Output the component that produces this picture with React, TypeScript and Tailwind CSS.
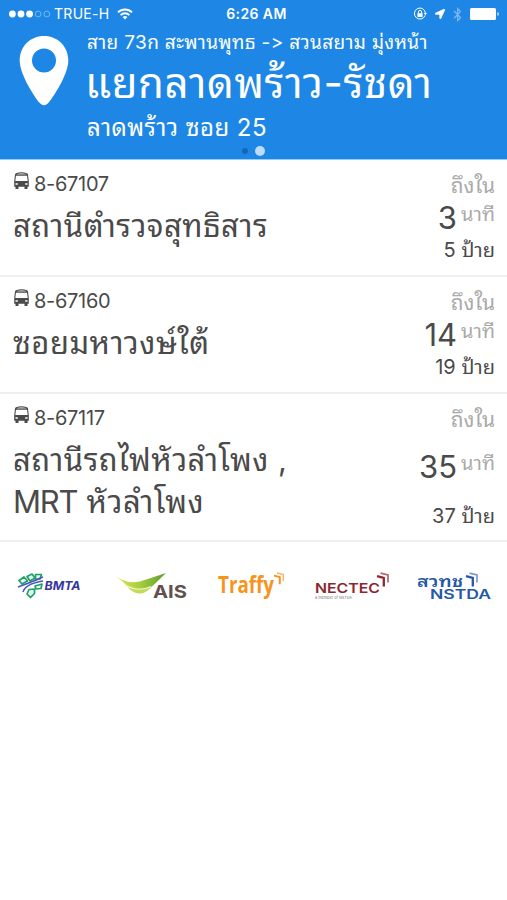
import type { ReactNode } from 'react';
import { FaBluetoothB, FaLocationArrow } from 'react-icons/fa';

type Arrival = {
  bus: string;
  place: ReactNode[];
  minutes: number;
  stops: number;
};

const arrivals: Arrival[] = [
  { bus: '8-67107', place: ['สถานีตำรวจสุทธิสาร'], minutes: 3, stops: 5 },
  { bus: '8-67160', place: ['ซอยมหาวงษ์ใต้'], minutes: 14, stops: 19 },
  {
    bus: '8-67117',
    place: [
      'สถานีรถไฟหัวลำโพง ,',
      <>
        <span className="tracking-[-1.2px]">MRT</span> หัวลำโพง
      </>,
    ],
    minutes: 35,
    stops: 37,
  },
];

function StatusBar() {
  return (
    <div className="grid h-7 grid-cols-3 items-center pl-[9px] pr-[7px] text-[14px] leading-none">
      <div className="flex items-center">
        <svg width="42" height="10" viewBox="0 0 42 10" fill="white">
          <circle cx="3.4" cy="5" r="3.4" />
          <circle cx="12" cy="5" r="3.4" />
          <circle cx="20.6" cy="5" r="3.4" />
          <circle cx="29.2" cy="5" r="2.9" fill="none" stroke="#8cc2f2" strokeWidth="0.8" />
          <circle cx="37.8" cy="5" r="2.9" fill="none" stroke="#8cc2f2" strokeWidth="0.8" />
        </svg>
        <span className="ml-[3px] whitespace-nowrap tracking-[0.3px]">TRUE-H</span>
        <svg className="ml-[7px]" width="16" height="12" viewBox="0 0 16 12" fill="none" stroke="white" strokeWidth="1.9">
          <path d="M1 4.4a10 10 0 0 1 14 0" />
          <path d="M3.6 7.1a6.3 6.3 0 0 1 8.800 0" />
          <path d="M8 11.5 5.6 9.1a3.4 3.4 0 0 1 4.8 0z" fill="white" stroke="none" />
        </svg>
      </div>
      <div className="whitespace-nowrap pl-1 text-center font-semibold tracking-[0.4px]">6:26 AM</div>
      <div className="flex items-center justify-end">
        <svg width="14" height="14" viewBox="0 0 14 14" fill="none" stroke="white">
          <path d="M12.1 8.4A5.5 5.5 0 1 1 12.4 6" strokeWidth="1" />
          <path d="M10.8 6h3.2l-1.6 2.2z" fill="white" stroke="none" />
          <rect x="4.4" y="6.2" width="5.2" height="3.8" rx="0.4" fill="white" stroke="none" />
          <path d="M5.4 6.4V5a1.6 1.6 0 0 1 3.2 0v1.4" strokeWidth="1" />
        </svg>
        <FaLocationArrow className="ml-2 size-[10px]" />
        <FaBluetoothB className="ml-[5px] size-[15px] text-[#7db8f0]" />
        <svg className="ml-[5px]" width="30" height="12" viewBox="0 0 30 12" fill="white">
          <rect x="0" y="0" width="26" height="12" rx="1.5" />
          <path d="M27.5 4v4a2.2 2.2 0 0 0 0-4z" />
        </svg>
      </div>
    </div>
  );
}

function PinIcon() {
  return (
    <svg width="50" height="70" viewBox="0 0 50 70">
      <path
        fill="white"
        fillRule="evenodd"
        d="M25 0C11 0 .7 10.700.7 24.500c0 14 15 36.500 19.800 42.300 2.700 3.200 6.300 3.200 9 0C34.300 61 49.300 38.500 49.300 24.500 49.300 10.700 39 0 25 0zm0 12.500a12 12 0 1 1 0 24 12 12 0 0 1 0-24z"
      />
    </svg>
  );
}

function BusIcon() {
  return (
    <svg width="16" height="18" viewBox="0 0 16 18">
      <path
        d="M3 1.200Q8.500-.6 14 1.200q.8.400 1 1.400l.8 6.600v5.600h-1.300V17h-3v-2.200H5.500V17h-3v-2.200H1.200V9.200L2 2.600q.2-1 1-1.400z"
        fill="#4a4a4a"
      />
      <path d="M4 1.900Q8.500.8 13 1.900v.7H4z" fill="#cccccc" />
      <path d="M3 3.700h11l.7 5.300H2.300z" fill="white" />
      <path d="M2.500 11.200h2.300v1.600H2.500zM12.200 11.200h2.300v1.600h-2.300z" fill="white" />
    </svg>
  );
}

function Header() {
  return (
    <header className="flex h-[160px] flex-col border-b border-[#8fd0fa] bg-[#1e87e5] text-white">
      <StatusBar />
      <div className="flex">
        <div className="w-[87px] pl-[19px] pt-2">
          <PinIcon />
        </div>
        <div className="whitespace-nowrap">
          <div className="h-[30px] text-[19px] leading-[30px] tracking-[0.34px]">สาย 73ก สะพานพุทธ -&gt; สวนสยาม มุ่งหน้า</div>
          <div className="-ml-0.5 h-[52px] text-[42px] leading-[50px] tracking-[0.6px]">แยกลาดพร้าว-รัชดา</div>
          <div className="h-9 text-[24px] leading-9 tracking-[0.45px]">ลาดพร้าว ซอย 25</div>
        </div>
      </div>
      <div className="flex h-[10px] items-center justify-center gap-[7px]">
        <span className="size-[6px] rounded-full bg-[#1567b5]" />
        <span className="size-[10px] rounded-full bg-[#bcdcf8]" />
      </div>
    </header>
  );
}

function ArrivalRow({ arrival }: { arrival: Arrival }) {
  const tall = arrival.place.length > 1;

  return (
    <li
      className={`flex justify-between border-b-2 border-[#f0f0f1] pl-[13px] pr-3 text-[#4a4a4a] ${
        tall ? 'h-[148px]' : 'h-[117px]'
      }`}
    >
      <div className="whitespace-nowrap">
        <div className="flex items-start gap-[5px] pt-3">
          <BusIcon />
          <span className="text-[20px] leading-6 tracking-[-0.3px]">{arrival.bus}</span>
        </div>
        <div className="pt-[9px] text-[31px] leading-[42px] tracking-[0.5px]">
          {arrival.place.map((line, index) => (
            <div key={index} className="h-[42px]">{line}</div>
          ))}
        </div>
      </div>
      <div className="flex flex-col items-end whitespace-nowrap">
        <div className="h-[38px] pt-[10px] text-[21px] leading-8 text-[#aaaaaa]">ถึงใน</div>
        <div className={`flex gap-1 ${tall ? 'h-[67px] pt-[15px]' : 'h-[35px]'}`}>
          <span className="text-[31px] leading-10">{arrival.minutes}</span>
          <span className="text-[20px] leading-[32px] text-[#aaaaaa]">นาที</span>
        </div>
        <div className="text-[20px] leading-[34px]">{arrival.stops} ป้าย</div>
      </div>
    </li>
  );
}

function BmtaLogo() {
  return (
    <svg width="66" height="30" viewBox="0 0 66 30">
      <g fill="#e4f8ef" stroke="#1fa067" strokeWidth="1.700" strokeLinejoin="round">
        <path d="M2 9.500 7 6l3.500 4L5 13z" />
        <path d="M10 5.500 15 3l3 4-5 3z" />
        <path d="M18.500 3.500h6L23 8l-4.500.5z" />
        <path d="M18 15l7-2L24 17.500l-5 .5z" />
        <path d="M12 18.500l5.500-.5v4.500l-4 4-3.500-3.500z" />
      </g>
      <path d="M1 16q8-3 12-4.500T26 6M6 21Q8 13 26 10" fill="none" stroke="#4a57b8" strokeWidth="1.500" />
      <text x="27.500" y="19" fontSize="12" fontWeight="700" fontStyle="italic" fill="#37379c" textLength="36" lengthAdjust="spacingAndGlyphs">
        BMTA
      </text>
    </svg>
  );
}

function AisLogo() {
  return (
    <svg width="74" height="32" viewBox="0 0 74 32">
      <defs>
        <linearGradient id="leaf" x1="0" x2="1">
          <stop offset="0" stopColor="#dbe94e" />
          <stop offset="0.5" stopColor="#a5cc3b" />
          <stop offset="1" stopColor="#5c9b34" />
        </linearGradient>
      </defs>
      <path d="M0 5.500q12 8 24 5Q38 6 50 2 42 10 36 15.500 25 25 14 18 9 12 0 5.500z" fill="url(#leaf)" />
      <path d="M9 13q14 8 27 2.500Q25 28 14 18.500z" fill="#c4dc55" />
      <path d="M10 14.500q13 7 25 1" fill="none" stroke="#f3f9cf" strokeWidth="1.200" />
      <text x="37" y="27" fontSize="18" fontWeight="700" fill="#62504e" textLength="34" lengthAdjust="spacingAndGlyphs">
        AIS
      </text>
    </svg>
  );
}

function Chevrons({ front, back }: { front: string; back: string }) {
  return (
    <>
      <path d="M3.500 1.200 11 3v7.500" fill="none" stroke={back} strokeWidth="1.700" />
      <path d="M0 4.200 6.800 6v8.500" fill="none" stroke={front} strokeWidth="2.300" />
    </>
  );
}

function TraffyLogo() {
  return (
    <svg width="70" height="36" viewBox="0 0 70 36">
      <text
        x="1"
        y="21.500"
        fontSize="23"
        fontWeight="700"
        fill="#f7941e"
        textLength="56"
        lengthAdjust="spacingAndGlyphs"
        className="font-['Open_Sans',sans-serif]"
      >
        Traffy
      </text>
      <g transform="translate(57 1) scale(0.85)">
        <Chevrons front="#f7941e" back="#f9b565" />
      </g>
    </svg>
  );
}

function NectecLogo() {
  return (
    <svg width="78" height="32" viewBox="0 0 78 32">
      <text x="1" y="21.500" fontSize="13.500" fontWeight="600" fill="#8c2731" textLength="65" lengthAdjust="spacingAndGlyphs">
        NECTEC
      </text>
      <text x="1" y="28" fontSize="4" fill="#777777" textLength="37" lengthAdjust="spacingAndGlyphs">
        a member of NSTDA
      </text>
      <g transform="translate(63 1)">
        <Chevrons front="#8c2731" back="#b5646b" />
      </g>
    </svg>
  );
}

function NstdaLogo() {
  return (
    <svg width="78" height="32" viewBox="0 0 78 32">
      <text x="1" y="15.500" fontSize="16" fontWeight="600" fill="#2658a5" textLength="46" lengthAdjust="spacingAndGlyphs">
        สวทช
      </text>
      <text x="14" y="28" fontSize="12.500" fontWeight="600" fill="#2658a5" textLength="61" lengthAdjust="spacingAndGlyphs">
        NSTDA
      </text>
      <g transform="translate(50 1)">
        <Chevrons front="#2658a5" back="#8299c9" />
      </g>
    </svg>
  );
}

function Sponsors() {
  return (
    <footer className="flex items-start pl-[17px] pt-[29px]">
      <BmtaLogo />
      <div className="ml-[33px]">
        <AisLogo />
      </div>
      <div className="ml-[27px]">
        <TraffyLogo />
      </div>
      <div className="ml-[27px]">
        <NectecLogo />
      </div>
      <div className="ml-[24px]">
        <NstdaLogo />
      </div>
    </footer>
  );
}

export default function App() {
  return (
    <main className="min-h-[900px] w-full bg-white font-['Inter','Noto_Sans_Thai_Looped','Loma',sans-serif] [font-feature-settings:'calt'_0]">
      <Header />
      <ul>
        {arrivals.map((arrival) => (
          <ArrivalRow key={arrival.bus} arrival={arrival} />
        ))}
      </ul>
      <Sponsors />
    </main>
  );
}
